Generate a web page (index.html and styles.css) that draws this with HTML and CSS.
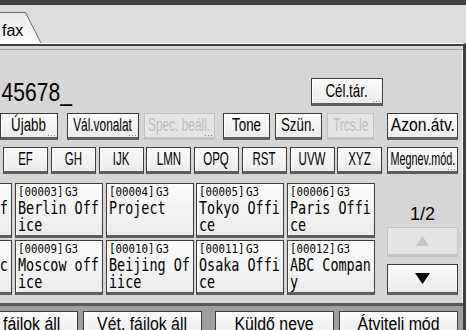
FILE: index.html
```html
<!DOCTYPE html>
<html lang="hu">
<head>
    <meta charset="UTF-8">
    <title>Fax célállomás</title>
    <link rel="stylesheet" href="styles.css">
</head>
<body>
    <div class="topbar"></div>
    <div class="tabs">
        <div class="tab">
            <svg class="tab-shape" width="42" height="31" viewBox="0 0 42 31">
                <defs>
                    <linearGradient id="tabfill" x1="0" y1="0" x2="0" y2="1">
                        <stop offset="0" stop-color="#e8e8e8"/>
                        <stop offset="1" stop-color="#ffffff"/>
                    </linearGradient>
                </defs>
                <path d="M0 0.5H25.5L41 31H0Z" fill="url(#tabfill)"/>
                <path d="M0 0.5H25.5L41 31" fill="none" stroke="#6a6a6a"/>
            </svg>
            <span class="tab-label">fax</span>
        </div>
    </div>
    <div class="frame">
        <div class="rule"></div>
        <div class="band"></div>
        <div class="main">
            <div class="entry">
                <span class="number">45678_</span>
                <div class="btn more b-dir"><span class="lbl">Cél.tár.</span></div>
            </div>
            <div class="row">
                <div class="btn more b-new"><span class="lbl">Újabb</span></div>
                <div class="btn more b-line"><span class="lbl tight">Vál.vonalat</span></div>
                <div class="btn more off b-spec"><span class="lbl tight">Spec. beáll.</span></div>
                <div class="btn b-tone"><span class="lbl">Tone</span></div>
                <div class="btn b-small"><span class="lbl">Szün.</span></div>
                <div class="btn off b-small"><span class="lbl tight">Trcs.le</span></div>
                <div class="btn b-side"><span class="lbl wide">Azon.átv.</span></div>
            </div>
            <div class="row">
                <div class="letters">
                    <div class="btn letter"><span class="lbl">EF</span></div>
                    <div class="btn letter"><span class="lbl">GH</span></div>
                    <div class="btn letter"><span class="lbl">IJK</span></div>
                    <div class="btn letter"><span class="lbl">LMN</span></div>
                    <div class="btn letter"><span class="lbl">OPQ</span></div>
                    <div class="btn letter"><span class="lbl">RST</span></div>
                    <div class="btn letter"><span class="lbl">UVW</span></div>
                    <div class="btn letter"><span class="lbl">XYZ</span></div>
                </div>
                <div class="btn more b-side"><span class="lbl squeeze">Megnev.mód.</span></div>
            </div>
            <div class="lower">
                <div class="dests">
                    <div class="part"><div class="dest"><div class="l1"> </div><div class="l2">         f</div></div></div>
                    <div class="dest"><div class="l1">[00003] G3</div><div class="l2">Berlin Off</div><div class="l2">ice</div></div>
                    <div class="dest"><div class="l1">[00004] G3</div><div class="l2">Project</div></div>
                    <div class="dest"><div class="l1">[00005] G3</div><div class="l2">Tokyo Offi</div><div class="l2">ce</div></div>
                    <div class="dest"><div class="l1">[00006] G3</div><div class="l2">Paris Offi</div><div class="l2">ce</div></div>
                    <div class="part"><div class="dest"><div class="l1"> </div><div class="l2">         c</div></div></div>
                    <div class="dest"><div class="l1">[00009] G3</div><div class="l2">Moscow off</div><div class="l2">ice</div></div>
                    <div class="dest"><div class="l1">[00010] G3</div><div class="l2">Beijing Of</div><div class="l2">iice</div></div>
                    <div class="dest"><div class="l1">[00011] G3</div><div class="l2">Osaka Offi</div><div class="l2">ce</div></div>
                    <div class="dest"><div class="l1">[00012] G3</div><div class="l2">ABC Compan</div><div class="l2">y</div></div>
                </div>
                <div class="pager">
                    <div class="page">1/2</div>
                    <div class="btn off pg pg-up">
                        <svg width="13" height="10" viewBox="0 0 13 10"><path d="M6.5 0L13 10H0Z" fill="#c6c6c6"/></svg>
                    </div>
                    <div class="btn pg pg-down">
                        <svg width="15" height="11" viewBox="0 0 15 11"><path d="M0 0H15L7.5 11Z" fill="#000"/></svg>
                    </div>
                </div>
            </div>
        </div>
        <div class="foot">
            <div class="fbtn fb-first"><span class="flbl">fájlok áll</span></div>
            <div class="fbtn fb-wide"><span class="flbl">Vét. fájlok áll</span></div>
            <div class="fbtn fb-wide fb-apart"><span class="flbl">Küldő neve</span></div>
            <div class="fbtn fb-wide"><span class="flbl">Átviteli mód</span></div>
        </div>
    </div>
</body>
</html>
```

FILE: styles.css
```css
* { box-sizing: border-box; }
body { margin: 0; width: 466px; height: 330px; overflow: hidden; background: #d6d6d6; color: #000;
       font-family: "Liberation Sans", Arial, sans-serif; }

.topbar { height: 5px; background: #404040; }
.tabs { height: 38px; background: #dddddd; display: flex; align-items: flex-end; }
.tab { position: relative; width: 42px; height: 31px; }
.tab-shape { position: absolute; left: 0; top: 0; }
.tab-label { position: relative; display: block; padding: 10px 0 0 2px; font-size: 16px; line-height: 18px; }

.frame { border-top: 1px solid #fff; border-right: 3px solid #404040; }
.rule { height: 2px; background: #404040; }
.band { height: 4px; border-bottom: 1px solid #a4a4a4; }
.main { padding: 28px 4px 8px 0; border-right: 1px solid #f6f6f6; }

/* condensed look of the panel font */
.lbl { display: inline-block; transform: scaleX(0.74); }
.lbl.tight { transform: scaleX(0.66); }
.lbl.wide { transform: scaleX(0.87); }
.lbl.squeeze { transform: scaleX(0.6); }
.letter .lbl { transform: scaleX(0.64); }

.btn { position: relative; display: flex; align-items: center; justify-content: center; height: 27px;
       border: 1px solid #3c3c3c; border-bottom: 3px solid #5e5e5e; background: linear-gradient(#fbfbfb, #ebebeb);
       box-shadow: inset 1px 1px 0 #fff; font-size: 18px; white-space: nowrap; }
.btn.off { border-color: #c2c2c2; border-bottom-color: #c4c4c4; background: #e4e4e4; color: #bcbcbc; box-shadow: none; }
.more::after { content: ""; position: absolute; right: 2px; bottom: 1px; width: 7px; height: 1px;
               background: repeating-linear-gradient(to right, #808080 0 1px, transparent 1px 3px); }

.entry { display: flex; align-items: center; height: 28px; }
.number { display: inline-block; font-size: 26px; line-height: 28px; padding-left: 2px; transform: scaleX(0.81); transform-origin: 0 0; }
.b-dir { width: 72px; height: 28px; margin-left: auto; margin-right: 75px; }

.row { display: flex; margin-top: 7px; }
.b-new { width: 58px; }
.b-line { width: 72px; margin-left: 9px; }
.b-spec { width: 71px; margin-left: 5px; }
.b-tone { width: 47px; margin-left: 8px; }
.b-small { width: 47px; margin-left: 5px; }
.b-side { width: 71px; margin-left: auto; }

.letters { display: flex; gap: 2.75px; padding-left: 3px; }
.letter { width: 45px; }

.lower { display: flex; margin-top: 9px; }
.dests { display: grid; grid-template-columns: 12px repeat(4, 88px); grid-template-rows: 55px 55px; column-gap: 2.75px; row-gap: 2px; }
.dest { border: 1px solid #3c3c3c; border-bottom: 3px solid #5e5e5e; background: linear-gradient(#fbfbfb, #ebebeb);
        box-shadow: inset 1px 1px 0 #fff; padding: 1px 0 0 2px; overflow: hidden; }
.part { overflow: hidden; }
.part .dest { width: 88px; height: 100%; margin-left: -76px; }
.l1 { font-family: "DejaVu Sans Mono", monospace; font-size: 12px; line-height: 15px; white-space: pre;
      word-spacing: -5.5px; transform: scaleX(0.9); transform-origin: 0 0; }
.l2 { font-family: "DejaVu Sans Mono", monospace; font-size: 17px; line-height: 17px; white-space: pre;
      transform: scaleX(0.79); transform-origin: 0 0; }

.pager { width: 71px; margin-left: auto; padding-top: 21px; }
.page { text-align: center; font-size: 18px; line-height: 20px; }
.pg { height: 30px; margin-top: 3px; }
.pg-down { height: 31px; margin-top: 7px; }

.foot { display: flex; height: 30px; padding-top: 5px; background: #9e9e9e; border-top: 3px solid #5a5a5a; }
.fbtn { height: 26px; padding-top: 2px; border: 1px solid #3c3c3c; border-bottom: none; background: linear-gradient(#fbfbfb, #ececec);
        font-size: 18px; line-height: 20px; text-align: center; white-space: nowrap; }
.flbl { display: inline-block; transform: scaleX(0.88); }
.fb-first { width: 78px; border-left: none; padding-left: 3px; text-align: left; }
.fb-first .flbl { transform-origin: 0 0; }
.fb-wide { width: 119px; margin-left: 5px; }
.fb-apart { margin-left: 13px; }
```
